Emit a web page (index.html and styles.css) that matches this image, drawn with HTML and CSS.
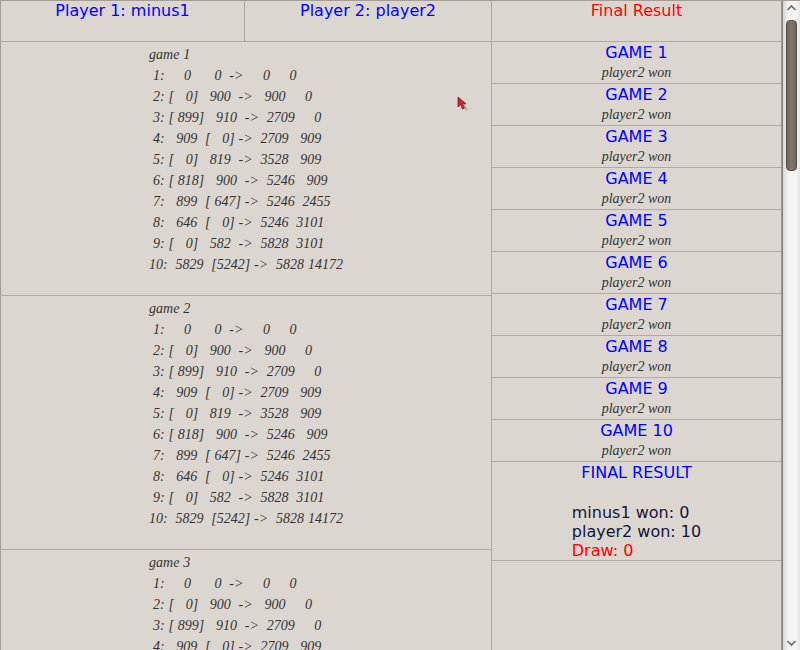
FILE: index.html
```html
<!DOCTYPE html>
<html>
<head>
<meta charset="utf-8">
<link rel="stylesheet" href="styles.css">
</head>
<body>
<div class="window">
  <div class="main">
    <div class="hcell h1">Player 1: minus1</div>
    <div class="hcell h2">Player 2: player2</div>
    <div class="hcell h3">Final Result</div>

    <div class="games">
      <div class="game"><div class="log">game 1
 1:     0      0  ->     0     0
 2: [   0]   900  ->   900     0
 3: [ 899]   910  ->  2709     0
 4:   909  [   0] ->  2709   909
 5: [   0]   819  ->  3528   909
 6: [ 818]   900  ->  5246   909
 7:   899  [ 647] ->  5246  2455
 8:   646  [   0] ->  5246  3101
 9: [   0]   582  ->  5828  3101
10:  5829  [5242] ->  5828 14172
</div></div>
      <div class="game"><div class="log">game 2
 1:     0      0  ->     0     0
 2: [   0]   900  ->   900     0
 3: [ 899]   910  ->  2709     0
 4:   909  [   0] ->  2709   909
 5: [   0]   819  ->  3528   909
 6: [ 818]   900  ->  5246   909
 7:   899  [ 647] ->  5246  2455
 8:   646  [   0] ->  5246  3101
 9: [   0]   582  ->  5828  3101
10:  5829  [5242] ->  5828 14172
</div></div>
      <div class="game"><div class="log">game 3
 1:     0      0  ->     0     0
 2: [   0]   900  ->   900     0
 3: [ 899]   910  ->  2709     0
 4:   909  [   0] ->  2709   909
 5: [   0]   819  ->  3528   909
 6: [ 818]   900  ->  5246   909
 7:   899  [ 647] ->  5246  2455
 8:   646  [   0] ->  5246  3101
 9: [   0]   582  ->  5828  3101
10:  5829  [5242] ->  5828 14172
</div></div>
    </div>

    <div class="results">
      <div class="row"><div class="gtitle">GAME 1</div><div class="won">player2 won</div></div>
      <div class="row"><div class="gtitle">GAME 2</div><div class="won">player2 won</div></div>
      <div class="row"><div class="gtitle">GAME 3</div><div class="won">player2 won</div></div>
      <div class="row"><div class="gtitle">GAME 4</div><div class="won">player2 won</div></div>
      <div class="row"><div class="gtitle">GAME 5</div><div class="won">player2 won</div></div>
      <div class="row"><div class="gtitle">GAME 6</div><div class="won">player2 won</div></div>
      <div class="row"><div class="gtitle">GAME 7</div><div class="won">player2 won</div></div>
      <div class="row"><div class="gtitle">GAME 8</div><div class="won">player2 won</div></div>
      <div class="row"><div class="gtitle">GAME 9</div><div class="won">player2 won</div></div>
      <div class="row"><div class="gtitle">GAME 10</div><div class="won">player2 won</div></div>
      <div class="final">
        <div class="gtitle">FINAL RESULT</div>
        <div class="summary">
          <div class="sline">minus1 won: 0</div>
          <div class="sline">player2 won: 10</div>
          <div class="sline draw">Draw: 0</div>
        </div>
      </div>
    </div>
  </div>

  <div class="scrollbar">
    <svg class="arrow" width="17" height="14" viewBox="0 0 17 14"><path d="M4.5 9 L8.5 5 L12.5 9" fill="none" stroke="#6a6a6a" stroke-width="1.6"/></svg>
    <div class="track"><div class="thumb"></div></div>
    <svg class="arrow" width="17" height="14" viewBox="0 0 17 14"><path d="M4.5 5 L8.5 9 L12.5 5" fill="none" stroke="#6a6a6a" stroke-width="1.6"/></svg>
  </div>

  <svg class="cursor" width="14" height="16" viewBox="0 0 14 16"><path d="M1 1 L1 11 L3.5 8.5 L5.5 13 L7.5 12 L5.5 7.8 L9 7.8 Z" fill="#c8262a" stroke="#8a1518" stroke-width="0.8"/><path d="M6 9 L10 14" stroke="rgba(120,120,120,0.35)" stroke-width="3"/></svg>
</div>
</body>
</html>
```

FILE: styles.css
```css
html, body {
  margin: 0;
  padding: 0;
}
body {
  background: #dbd7d0;
  overflow: hidden;
}
.window {
  position: relative;
  display: flex;
  width: 800px;
  height: 650px;
  box-sizing: border-box;
  border-top: 1px solid #a39d95;
  border-left: 1px solid #a39d95;
  background: #dbd7d0;
  overflow: hidden;
}
.main {
  width: 781px;
  flex: none;
  display: grid;
  grid-template-columns: 244px 247px 290px;
  grid-template-rows: 41px auto;
  align-content: start;
}
.hcell {
  box-sizing: border-box;
  height: 41px;
  border-bottom: 1px solid #b0aaa2;
  border-right: 1px solid #b0aaa2;
  text-align: center;
  font-family: "DejaVu Sans", sans-serif;
  font-size: 16px;
  line-height: 19px;
  color: #0000ff;
}
.h3 {
  color: #ff0000;
  border-right-color: #9c968e;
}
.games {
  grid-column: 1 / 3;
  border-right: 1px solid #b0aaa2;
}
.game {
  box-sizing: border-box;
  height: 254px;
  padding-top: 2px;
  border-bottom: 1px solid #b0aaa2;
  text-align: center;
}
.log {
  display: inline-block;
  text-align: left;
  white-space: pre;
  font-family: "Liberation Serif", serif;
  font-style: italic;
  font-size: 14px;
  line-height: 21px;
  word-spacing: 0.4px;
  color: #353331;
}
.results {
  border-right: 1px solid #9c968e;
}
.row {
  box-sizing: border-box;
  height: 42px;
  padding-top: 1px;
  border-bottom: 1px solid #b0aaa2;
  text-align: center;
}
.gtitle {
  font-family: "DejaVu Sans", sans-serif;
  font-size: 16px;
  line-height: 19px;
  color: #0000ff;
}
.won {
  font-family: "Liberation Serif", serif;
  font-style: italic;
  font-size: 14px;
  line-height: 21px;
  color: #353331;
}
.final {
  box-sizing: border-box;
  height: 99px;
  padding-top: 1px;
  border-bottom: 1px solid #b0aaa2;
  text-align: center;
}
.summary {
  display: inline-block;
  text-align: left;
  margin-top: 21px;
}
.sline {
  font-family: "DejaVu Sans", sans-serif;
  font-size: 16px;
  line-height: 19px;
  color: #14143a;
}
.sline.draw {
  color: #ff0000;
}
.scrollbar {
  width: 18px;
  flex: none;
  box-sizing: border-box;
  border-left: 1px solid #8d877f;
  background: linear-gradient(to right, #d6d6d6, #f3f3f3 30%, #f5f5f5 75%, #e6e6e6);
  display: flex;
  flex-direction: column;
}
.arrow {
  display: block;
  flex: none;
}
.track {
  flex: 1;
  padding-top: 5px;
}
.thumb {
  margin-left: 3px;
  width: 11px;
  height: 151px;
  box-sizing: border-box;
  border: 1px solid #564e49;
  border-radius: 4px;
  background: linear-gradient(to right, #6e655f, #81776f 50%, #6e655f);
}
.cursor {
  position: absolute;
  left: 456px;
  top: 95px;
}
```
